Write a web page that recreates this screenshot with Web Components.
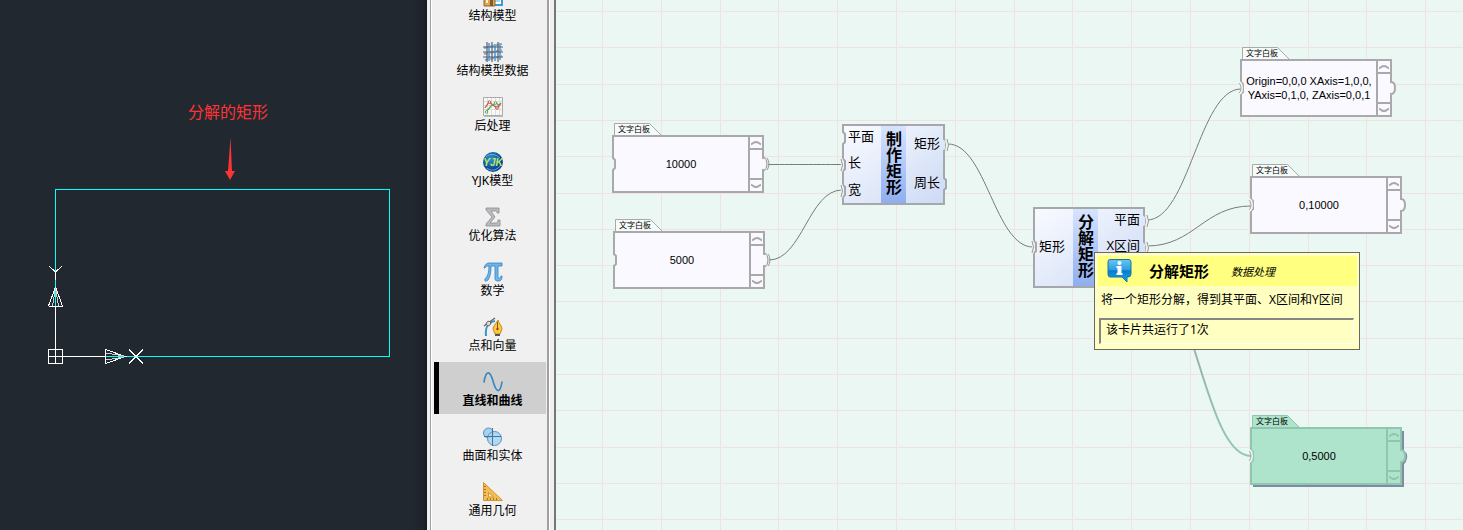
<!DOCTYPE html>
<html lang="zh-CN">
<head>
<meta charset="utf-8">
<title>分解矩形</title>
<style>
html, body { margin: 0; height: 100%; }
body { font-family: "Noto Sans", "Noto Sans CJK SC", sans-serif; font-size: 12px; color: #000; overflow: hidden; }
</style>
</head>
<body>
<app-shell>
  <cad-view slot="cad" label="分解的矩形"></cad-view>
  <tool-palette slot="tools">
    <tool-item icon="model">结构模型</tool-item>
    <tool-item icon="mesh">结构模型数据</tool-item>
    <tool-item icon="chart">后处理</tool-item>
    <tool-item icon="yjk">YJK模型</tool-item>
    <tool-item icon="sigma">优化算法</tool-item>
    <tool-item icon="pi">数学</tool-item>
    <tool-item icon="pen">点和向量</tool-item>
    <tool-item icon="wave" selected>直线和曲线</tool-item>
    <tool-item icon="solid">曲面和实体</tool-item>
    <tool-item icon="ruler">通用几何</tool-item>
  </tool-palette>
  <flow-canvas slot="canvas">
    <text-board x="56" y="123" output>10000</text-board>
    <text-board x="57" y="219" output>5000</text-board>
    <function-card x="286" y="124" width="103" name="制作矩形" inputs="平面,长*,宽*" outputs="矩形*,周长"></function-card>
    <function-card x="477" y="207" width="112" name="分解矩形" inputs="矩形*" outputs="平面*,X区间*,"></function-card>
    <text-board x="684" y="47" input>Origin=0,0,0 XAxis=1,0,0, YAxis=0,1,0, ZAxis=0,0,1</text-board>
    <text-board x="694" y="164" input>0,10000</text-board>
    <text-board x="694" y="415" input active>0,5000</text-board>
    <card-tip x="538" y="252" name="分解矩形" category="数据处理" status="该卡片共运行了1次">将一个矩形分解，得到其平面、X区间和Y区间</card-tip>
  </flow-canvas>
</app-shell>

<script>
const define = (name, setup) => customElements.define(name, class extends HTMLElement {
  connectedCallback() {
    if (this.shadowRoot) return;
    this.attachShadow({ mode: "open" }).innerHTML = setup(this);
  }
});
const place = el => `left:${el.getAttribute("x")}px;top:${el.getAttribute("y")}px`;

define("app-shell", () => `
<style>
:host { display: flex; height: 100vh; background: #f0f0f0; }
slot { display: block; min-width: 0; }
.cad { flex: 0 0 427px; }
.tools { flex: 0 0 129px; }
.canvas { flex: 1; }
</style>
<slot class="cad" name="cad"></slot>
<slot class="tools" name="tools"></slot>
<slot class="canvas" name="canvas"></slot>`);

define("cad-view", el => `
<style>
:host { display: block; position: relative; height: 100%; overflow: hidden;
  background: linear-gradient(90deg, #222830 calc(100% - 14px), #1e2229 calc(100% - 3px), #181a22 100%); }
svg { display: block; }
p { position: absolute; margin: 0; left: 188px; top: 100px; font-size: 16px; line-height: 24px; color: #f33; }
</style>
<svg width="427" height="530" fill="none" stroke-width="1" shape-rendering="crispEdges">
  <path stroke="#00ffff" d="M55.500 356.500V189.500H389.500V356.500H55.500"/>
  <g stroke="#fff">
    <path d="M48.500 349.500h14v14h-14zM48 356.500H105M55.500 363V306.500M48.500 306.500h14M105.500 349.500v14M55.500 280V272"/>
    <path d="M49 266l6.500 6 6.500-6M55.500 287l-7 19M55.500 287l7 19M105.500 349.500l20 7-20 7M129 349.500l14 14M143 349.500l-14 14"/>
    <path stroke="#ccc" d="M55.500 288l-3 18M55.500 288l3 18M106 353l18 3M106 360l18-3"/>
    <path stroke="#00ffff" d="M55.500 292V306M106 356.500h14"/>
  </g>
  <path shape-rendering="auto" fill="#ff3333" d="M230.500 137L232 171h3l-5 9-5-9h3z"/>
</svg>
<p>${el.getAttribute("label")}</p>`);

define("tool-palette", () => `
<style>
:host { display: flex; box-sizing: border-box; height: 100%; padding: 0 0 0 3px; background: #f0f0f0; border-right: 2px solid #777; }
nav { flex: 1; margin-right: 5px; padding: 0 1px 0 3px; overflow: hidden;
  border: solid #a0a0a0; border-width: 0 2px 0 1px; box-shadow: inset 1px 0 #fff, 1px 0 #fff; }
.list { display: grid; gap: 3px; margin-top: -23px; }
</style>
<nav aria-label="工具分类"><div class="list"><slot></slot></div></nav>`);

const icons = {
  model: `<path fill="#fff" stroke="#3a9bd0" stroke-width="2" d="M6 3h13v15H9z"/><path fill="#a9d7f2" d="M12 9h5v6h-5z"/><path fill="#dca650" stroke="#8b6a32" d="M1 11l5-5 6 5v8H1z"/><path fill="#fff0bd" d="M3 11h2v5H3z"/><path fill="#7d5b2d" d="M7 13h3v6H7z"/>`,
  mesh: `<g fill="none"><path stroke="#4e94d2" stroke-width="2" opacity=".75" d="M1 6l18-4M1 12l18-4M2 18l17-4M6 19V1M12 19V2M17 18V1"/><path stroke="#59616c" stroke-width="1.200" d="M0 5h20M0 10h20M0 15h20M4 0v20M9 0v20M15 0v20"/></g>`,
  chart: `<path fill="#f8f8f8" stroke="#aaa" d="M.500.500h19v18H.500z"/><path fill="none" stroke="#ddd" d="M4.500 1v17M8.500 1v17M12.500 1v17M16.500 1v17M1 4.500h18M1 8.500h18M1 12.500h18"/><path fill="none" stroke="#d34d4d" stroke-width="1.300" d="M2 11l4-6 4 3 4 3 4-5"/><path fill="none" stroke="#53a944" stroke-width="1.300" d="M3 15l5-6 5-3 4 3"/><g fill="#fff" stroke="#d34d4d"><circle cx="6.500" cy="5" r="1.300"/><circle cx="14" cy="11" r="1.300"/></g><g fill="#fff" stroke="#53a944"><circle cx="3.500" cy="15" r="1.300"/><circle cx="12.500" cy="6" r="1.300"/></g><path stroke="#bbb" d="M1 19.500h19"/>`,
  yjk: `<defs><radialGradient id="g" cx=".4" cy=".35"><stop stop-color="#3595ca"/><stop offset="1" stop-color="#0a4890"/></radialGradient></defs><circle cx="10" cy="10" r="10" fill="url(#g)"/><path fill="none" stroke="#79c8e6" stroke-width=".8" d="M3 5c4-4 10-3 14 1M4 16c5 4 10 2 14-3"/><text x="10" y="14" text-anchor="middle" font-family="Liberation Sans" font-size="10" font-weight="bold" font-style="italic" fill="#b5ea70">YJK</text>`,
  sigma: `<path fill="#b8babc" stroke="#8b8e91" stroke-width=".8" d="M3 1h13v5h-2c0-2-1-2-2-2H8l4 6-5 6h6c1 0 2-1 2-3h2v6H3v-2l6-7-6-7z"/>`,
  pi: `<path fill="#6bb7ec" stroke="#337ebb" stroke-width=".8" d="M1 6c1-4 3-5 6-5h12v3h-4v10c0 3 2 3 3 0h1c0 4-1 5-4 5s-3-1-3-4V4H8c0 7-1 11-3 14-2 2-4 1-3-1 3-3 4-7 4-13-2 0-3 0-4 2z"/>`,
  pen: `<path fill="none" stroke="#3d91cb" stroke-width="2" d="M3 19C2 11 5 5 12 4"/><path stroke="#666" stroke-width="1.500" d="M1 9L12 1"/><path fill="#ddd" stroke="#666" d="M4 5l2-1 2 2-1 2-2 1-2-2z"/><path fill="#ffc83d" stroke="#c78820" d="M15 3c1 4 4 6 4 9l-2 5h-5l-2-5c0-3 3-5 5-9z"/><path stroke="#7d5b20" d="M14.500 5v7"/><circle cx="14.500" cy="12" r="1.200" fill="#75531e"/><path fill="#555" d="M12 17h5v2h-5z"/>`,
  wave: `<path fill="none" stroke="#3488bd" stroke-width="1.600" stroke-linecap="round" d="M1 10C3-2 7-2 10 9s7 14 9 1"/>`,
  solid: `<g stroke="#5691c0"><circle cx="5.500" cy="6" r="5" fill="#a7d1ef"/><circle cx="11.500" cy="11.500" r="7" fill="#a7d4f4" fill-opacity=".85"/></g><path fill="none" stroke="#47759a" d="M9.500 1v18M1 9.500h17"/>`,
  ruler: `<path fill="#f5bd4e" stroke="#cf9535" fill-rule="evenodd" d="M.500.500l19 18H.500zM5.500 10.500v4.500h5z"/><path stroke="#a97625" d="M1 4.500h2M1 7.500h2M1 10.500h2M1 13.500h2M4.500 18v-2M7.500 18v-2M10.500 18v-2M13.500 18v-2"/>`
};

define("tool-item", el => `
<style>
:host { display: block; }
button { display: flex; flex-direction: column; align-items: center; box-sizing: border-box; width: 100%; height: 52px;
  margin: 0; padding: 10px 0 0; border: 0 solid transparent; border-left-width: 5px; background: none; color: #000; font: inherit; line-height: 17px; white-space: nowrap; }
:host([selected]) button { background: #cfcfcf; border-color: #000; font-weight: bold; }
svg { display: block; flex: none; }
</style>
<button type="button" aria-pressed="${el.hasAttribute("selected")}">
  <svg width="20" height="20" viewBox="0 0 20 20" aria-hidden="true">${icons[el.getAttribute("icon")]}</svg>
  <span><slot></slot></span>
</button>`);

const gridLines = () => {
  let d = "";
  for (let i = 0; i < 60; i++) d += `M${Math.round(46 + i * 58.8)}.5 0V2000`;
  for (let i = 0; i < 60; i++) d += `M0 ${Math.round(11 + i * 36.3)}.5H4000`;
  return d;
};
const wire = (x1, y1, x2, y2) => {
  const k = Math.round((x2 - x1) * 0.45);
  return `M${x1} ${y1}C${x1 + k} ${y1} ${x2 - k} ${y2} ${x2} ${y2}`;
};

define("flow-canvas", () => `
<style>
:host { display: block; position: relative; height: 100%; overflow: hidden; background: #ebf7f3; }
svg { position: absolute; inset: 0; width: 100%; height: 100%; }
</style>
<svg aria-hidden="true" fill="none">
  <defs><linearGradient id="w" x1="0" y1="0" x2="0" y2="1"><stop offset=".4" stop-color="#98b3a7"/><stop offset="1" stop-color="#90c9b1"/></linearGradient></defs>
  <path stroke="#f0e2e4" shape-rendering="crispEdges" d="${gridLines()}"/>
  <path stroke="#777c7a" d="${[wire(212, 164.5, 286, 164.5), wire(213, 260, 286, 190), wire(392, 144, 477, 247), wire(591, 220, 685, 89), wire(591, 246, 695, 206)].join("")}"/>
  <path stroke="url(#w)" stroke-width="2" d="${wire(591, 273, 695, 456)}"/>
</svg>
<slot></slot>`);

define("text-board", el => `
<style>
:host { position: absolute; display: block; width: 152px; --edge: #a9a9a9; --face: #f9f9ff; --tab: #f6fbfa; ${place(el)} }
:host([active]) { --edge: #90c6af; --face: #ade4cb; --tab: #ade4cb; }
.frame { position: absolute; left: 0; top: 0; overflow: visible; }
.tab { position: relative; height: 12px; padding-left: 6px; font-size: 8px; line-height: 12px; }
.body { position: relative; display: grid; grid-template-columns: 1fr 14px; height: 54px; padding: 2px; }
.text { display: flex; align-items: center; justify-content: center; padding: 0 3px 0 3px; text-align: center; font-family: "Liberation Sans", Arial, sans-serif; font-size: 11px; line-height: 14px; }
.bar { display: grid; grid-template-rows: 13px 1fr 13px; border-left: 2px solid var(--edge); }
button { padding: 0; border: 0 solid var(--edge); background: none; display: grid; place-items: center; }
.up { border-bottom-width: 2px; }
.down { border-top-width: 2px; }
</style>
<svg class="frame" width="160" height="74" fill="none" aria-hidden="true">
  ${el.hasAttribute("active") ? `<path fill="#7e8ca3" d="M3 16H154V36q4 2 3 7t-3 6V72H3z"/>` : ""}
  <path fill="var(--tab)" stroke="var(--edge)" d="M2.500 12V.500H37.500L49 12"/>
  <path fill="var(--face)" stroke="var(--edge)" stroke-width="2" d="M1 13H151V35c3 0 4 3 4 6s-1 6-4 6V69H1V47l2-2V37l-2-2z"/>
  ${el.hasAttribute("output") ? `<path stroke="#f5f5f5" stroke-width="3" d="M153 35q3 6 0 12"/><path stroke="#999" d="M152 34q3 2 3 7t-3 7M155 35q2 2 2 6t-2 6"/>` : ""}
  ${el.hasAttribute("input") ? `<path stroke="#f0f6f2" stroke-width="2" d="M-1 35q3 1 3 6t-3 6"/><path stroke="#a5aaa6" d="M-1 36q2 1 2 5t-2 5"/>` : ""}
</svg>
<div class="tab">文字白板</div>
<div class="body">
  <div class="text"><span><slot></slot></span></div>
  <div class="bar">
    <button class="up" type="button" aria-label="向上"><svg width="10" height="6" fill="none" stroke="var(--edge)" stroke-width="2"><path d="M0 4.500L3 2.500Q5 1.500 7 2.500L10 4.500"/></svg></button>
    <span></span>
    <button class="down" type="button" aria-label="向下"><svg width="10" height="6" fill="none" stroke="var(--edge)" stroke-width="2"><path d="M0 1.500L3 3.500Q5 4.500 7 3.500L10 1.500"/></svg></button>
  </div>
</div>`);

define("function-card", el => {
  const w = Number(el.getAttribute("width")), h = 81;
  const split = name => el.getAttribute(name).split(",");
  const ins = split("inputs"), outs = split("outputs");
  const at = (list, i) => Math.round((h - 2) / list.length * (i + .5)) + (list.length === 1 ? 0 : 1);
  let frame = "M1 1";
  frame += `H${w - 1}`;
  outs.forEach((_, i) => { const y = at(outs, i); frame += `V${y - 6}l2 2v8l-2 2`; });
  frame += `V${h - 1}H1`;
  [...ins.keys()].reverse().forEach(i => { const y = at(ins, i); frame += `V${y + 6}l2-2v-8l-2-2`; });
  frame += "Z";
  const link = (list, x, s) => list.map((t, i) => t.endsWith("*") ? `<path stroke="#f0f2f2" stroke-width="3" d="M${x} ${at(list, i) - 6}q3 6 0 12"/><path stroke="#999" d="M${x + s} ${at(list, i) - 6}q3 6 0 12"/>` : "").join("");
  const rows = list => list.map(t => `<span>${t.replace("*", "")}</span>`).join("");
  return `
<style>
:host { position: absolute; display: block; box-sizing: border-box; height: ${h}px; width: ${w}px; padding: 2px; ${place(el)} }
.card { position: relative; display: grid; grid-template-columns: ${w > 105 ? 38 : 37}px 25px 1fr; height: 100%; font-size: 13px; line-height: 16px; }
.col { display: grid; grid-auto-rows: 1fr; align-items: center; margin: -3px 0 1px; padding: 0 3px 0 4px; white-space: nowrap; }
.out { text-align: right; }
h2 { margin: 0; padding: 0 2px 3px 0; display: flex; align-items: center; justify-content: center; writing-mode: vertical-rl; font-size: 16px; line-height: 23px; font-weight: bold;
  background: linear-gradient(#d7e4ff, #8eaef0); }
svg { position: absolute; left: 0; top: 0; overflow: visible; }
</style>
<svg width="${w}" height="${h}" fill="none" aria-hidden="true">
  <defs><linearGradient id="f" x1="0" y1="0" x2="1" y2="1"><stop stop-color="#fafbff"/><stop offset="1" stop-color="#ccdaf5"/></linearGradient></defs>
  <path fill="url(#f)" stroke="#a5a7aa" stroke-width="2" d="${frame}"/>
  ${link(ins, -1, 0)}${link(outs, w + 1, 1)}
</svg>
<div class="card"><div class="col">${rows(ins)}</div><h2>${el.getAttribute("name")}</h2><div class="col out">${rows(outs)}</div></div>`;
});

define("card-tip", el => `
<style>
:host { position: absolute; box-sizing: border-box; width: 266px; ${place(el)}; padding: 3px 2px 5px 3px; background: #ffffc1; border: 1px solid #686868; }
header { display: flex; align-items: center; height: 30px; padding-left: 9px; background: #ffff80; }
header svg { flex: none; margin-right: 17px; }
h3 { margin: 0 22px 0 0; font-size: 15px; line-height: 20px; }
em { font-size: 11px; }
p { margin: 0; padding-left: 3px; line-height: 27px; height: 32px; white-space: nowrap; }
.status { box-sizing: border-box; height: 26px; margin: 0 3px 0 1px; padding-left: 5px; line-height: 20px; border: 2px solid; border-color: #858585 #fff #fff #858585; border-width: 2px 1px 1px 2px; }
</style>
<header>
  <svg width="25" height="24" viewBox="0 0 25 24" aria-hidden="true">
    <defs><linearGradient id="i" x1="0" y1="0" x2="0" y2="1"><stop stop-color="#69c4f5"/><stop offset=".45" stop-color="#2b9fe3"/><stop offset=".5" stop-color="#087dcc"/><stop offset="1" stop-color="#1ba6e8"/></linearGradient></defs>
    <path fill="url(#i)" stroke="#1674ae" d="M3 .500h19q2 0 2 3V15q0 3-3 3h-1v5l-5-5H3q-2 0-2-3V3Q1 .500 3 .500z"/>
    <circle cx="12.500" cy="4" r="2" fill="#fff"/><path fill="#fff" d="M9.500 7h5v7h1v2h-6v-2h1V9h-1z"/>
  </svg>
  <h3>${el.getAttribute("name")}</h3><em>${el.getAttribute("category")}</em>
</header>
<p><slot></slot></p>
<div class="status">${el.getAttribute("status")}</div>`);
</script>
</body>
</html>
